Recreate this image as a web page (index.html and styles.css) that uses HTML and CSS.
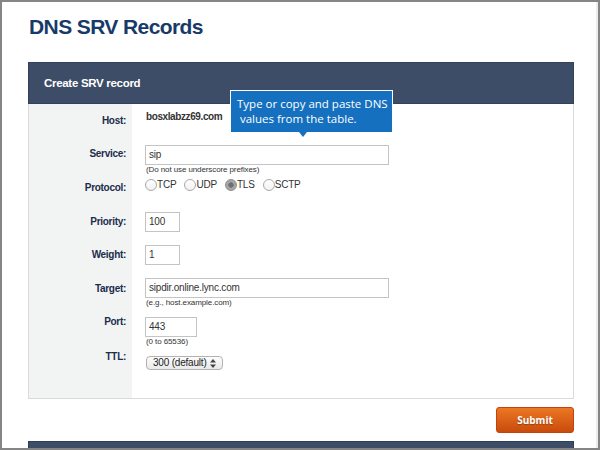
FILE: index.html
```html
<!DOCTYPE html>
<html>
<head>
<meta charset="utf-8">
<link rel="stylesheet" href="styles.css">
</head>
<body>
<div class="window">
  <div class="page">
    <h1 class="title">DNS SRV Records</h1>
    <section class="panel">
      <div class="panel-head">Create SRV record</div>
      <div class="tooltip">Type or copy and paste DNS<br>&nbsp;values from the table.</div>
      <div class="panel-body">
        <div class="row row-host">
          <div class="label">Host:</div>
          <div class="field"><span class="value">bosxlabzz69.com</span></div>
        </div>
        <div class="row row-service">
          <div class="label">Service:</div>
          <div class="field">
            <div class="input wide">sip</div>
            <div class="hint">(Do not use underscore prefixes)</div>
          </div>
        </div>
        <div class="row row-protocol">
          <div class="label">Protocol:</div>
          <div class="field radios">
            <span class="radio"><span class="dot"></span>TCP</span>
            <span class="radio"><span class="dot"></span>UDP</span>
            <span class="radio"><span class="dot checked"></span>TLS</span>
            <span class="radio"><span class="dot"></span>SCTP</span>
          </div>
        </div>
        <div class="row row-num">
          <div class="label">Priority:</div>
          <div class="field"><div class="input small">100</div></div>
        </div>
        <div class="row row-num">
          <div class="label">Weight:</div>
          <div class="field"><div class="input small">1</div></div>
        </div>
        <div class="row row-target">
          <div class="label">Target:</div>
          <div class="field">
            <div class="input wide">sipdir.online.lync.com</div>
            <div class="hint">(e.g., host.example.com)</div>
          </div>
        </div>
        <div class="row row-port">
          <div class="label">Port:</div>
          <div class="field">
            <div class="input port">443</div>
            <div class="hint">(0 to 65536)</div>
          </div>
        </div>
        <div class="row row-ttl">
          <div class="label">TTL:</div>
          <div class="field">
            <div class="select">300 (default)<svg class="arrows" width="6" height="9" viewBox="0 0 6 9"><path d="M0 3.5 L3 0 L6 3.5Z M0 5.5 L3 9 L6 5.5Z" fill="#444"/></svg></div>
          </div>
        </div>
      </div>
    </section>
    <div class="actions"><button class="submit">Submit</button></div>
    <div class="bottom-bar"></div>
  </div>
</div>
</body>
</html>
```

FILE: styles.css
```css
* { box-sizing: border-box; }
html, body { margin: 0; padding: 0; background: #fff; }
body {
  font-family: "Liberation Sans", Arial, sans-serif;
  font-size: 10px;
  color: #333;
  letter-spacing: -0.2px;
}
.window {
  width: 600px;
  height: 450px;
  border: 2px solid #858585;
  overflow: hidden;
  display: flex;
}
.page {
  flex: 1;
  padding-left: 26px;
  border-right: 2px solid #ececec;
  display: flex;
  flex-direction: column;
}
.title {
  margin: 13px 0 0 1px;
  font-size: 21px;
  line-height: 24px;
  font-weight: bold;
  letter-spacing: -0.6px;
  color: #173a68;
}
.panel {
  position: relative;
  width: 546px;
  margin-top: 23px;
}
.panel-head {
  height: 42px;
  background: #3d4d68;
  border: 1px solid #33425a;
  color: #fff;
  font-weight: bold;
  font-size: 11.5px;
  letter-spacing: -0.3px;
  padding: 13px 0 0 15px;
  line-height: 14px;
}
.panel-body {
  border: 1px solid #dadada;
  border-top: 0;
  padding-top: 1px;
  background: linear-gradient(to right, #f2f3f3 103px, #fff 103px);
}
.row {
  display: grid;
  grid-template-columns: 103px 1fr;
}
.label {
  text-align: right;
  padding-right: 6px;
  font-weight: bold;
  color: #1b2c4c;
  line-height: 13px;
  letter-spacing: -0.3px;
}
.field {
  padding-left: 13px;
  padding-top: 5px;
}
.row-host { height: 35px; }
.row-host .label { padding-top: 9px; }
.value { font-weight: bold; color: #333; letter-spacing: -0.4px; line-height: 13px; display: block; padding-left: 1px; }
.row-service { height: 37px; }
.row-service .label { padding-top: 7px; }
.row-protocol { height: 30px; }
.row-protocol .label { padding-top: 4px; }
.row-protocol .field { padding-top: 1px; }
.row-num { height: 33px; }
.row-num .label { padding-top: 8px; }
.row-target { height: 39px; }
.row-target .label { padding-top: 9px; }
.row-port { height: 38px; }
.row-port .label { padding-top: 3px; }
.row-ttl { height: 48px; }
.row-ttl .label { padding-top: 0; }
.row-ttl .field { padding-top: 6px; }

.input {
  height: 20px;
  border: 1px solid #c4c4c4;
  background: #fff;
  padding: 0 3px;
  line-height: 18px;
  color: #333;
  font-size: 10px;
}
.input.wide { width: 244px; }
.input.small { width: 35px; }
.input.port { width: 52px; }
.hint {
  font-size: 8px;
  line-height: 10px;
  letter-spacing: -0.1px;
  color: #333;
  padding-left: 1px;
}
.radios {
  display: flex;
  align-items: center;
  height: 14px;
  box-sizing: content-box;
}
.radio {
  display: inline-flex;
  align-items: center;
  margin-right: 8px;
  line-height: 14px;
}
.dot {
  width: 12px;
  height: 12px;
  border-radius: 50%;
  border: 1px solid #a9a9a9;
  background: linear-gradient(#fff, #f1f1f1);
  margin-right: 0;
}
.dot.checked {
  border-color: #8e8e8e;
  background: radial-gradient(circle, #6f6f6f 0 2.4px, #a6a6a6 3px);
}
.select {
  width: 77px;
  height: 14px;
  margin-left: 1px;
  border: 1px solid #b2b2b2;
  border-radius: 4px;
  background: linear-gradient(#fdfdfd, #e9e9e9);
  padding: 0 0 0 6px;
  font-size: 10px;
  line-height: 12px;
  color: #222;
  display: flex;
  align-items: center;
  justify-content: space-between;
  padding-right: 6px;
}
.arrows { display: block; }
.tooltip {
  position: absolute;
  left: 202px;
  top: 28px;
  width: 163px;
  height: 43px;
  background: #1670c0;
  border: 1px solid #fff;
  color: #fff;
  font-family: "Open Sans", "Noto Sans", sans-serif;
  font-size: 11.5px;
  line-height: 15px;
  letter-spacing: 0;
  padding: 5px 0 0 6px;
  white-space: nowrap;
}
.tooltip::after {
  content: "";
  position: absolute;
  left: 68px;
  bottom: -5px;
  border-left: 4px solid transparent;
  border-right: 4px solid transparent;
  border-top: 5px solid #1670c0;
}
.actions {
  width: 546px;
  display: flex;
  justify-content: flex-end;
  margin-top: 8px;
}
.submit {
  width: 78px;
  height: 26px;
  border: 1px solid #c4430c;
  border-radius: 3px;
  background: linear-gradient(#eb7722, #c94b0d);
  color: #fff;
  font-family: "Open Sans", "Noto Sans", sans-serif;
  font-weight: bold;
  font-size: 10px;
  letter-spacing: 0;
  text-shadow: 0 1px 1px rgba(0,0,0,0.3);
  padding: 0;
  margin-right: 0;
}
.bottom-bar {
  width: 546px;
  flex: 1;
  margin-top: 8px;
  background: #3d4d68;
  border: 1px solid #2f3d55;
  border-bottom: 0;
}
```
